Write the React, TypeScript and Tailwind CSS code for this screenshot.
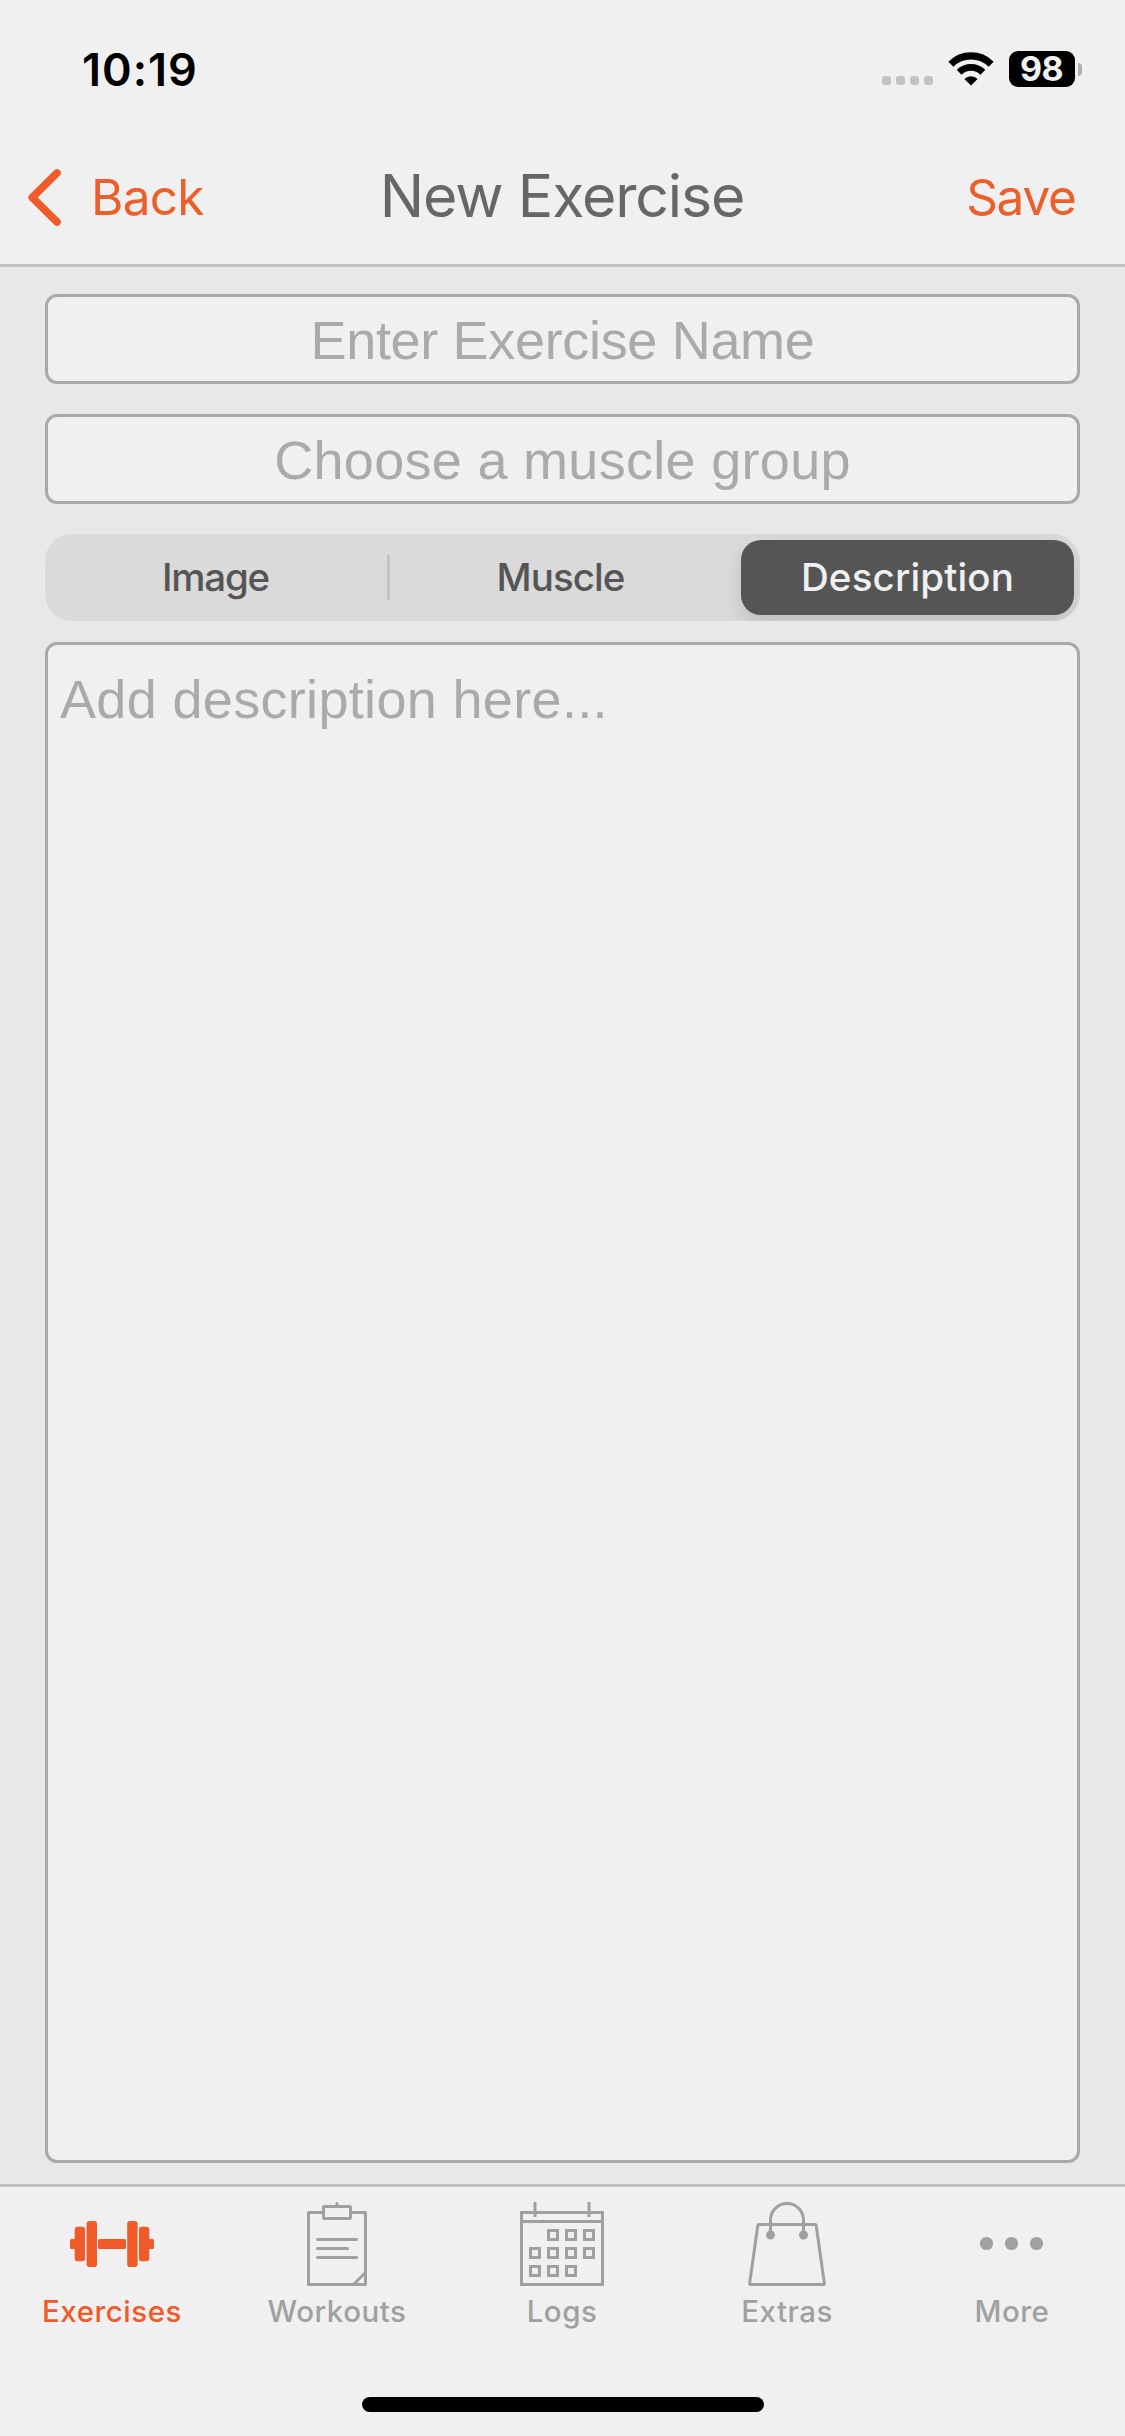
import { useState } from "react";
import type { ReactNode } from "react";
import clsx from "clsx";

interface Tab {
    label: string;
    icon: ReactNode;
}

function WifiIcon() {
    return (
        <svg width="46" height="34" viewBox="0 0 46 34" fill="none" stroke="black">
            <path d="M2.9 12.2a28.6 28.6 0 0 1 40.2 0" strokeWidth="7.2" />
            <path d="M11.1 20.3a17 17 0 0 1 23.8 0" strokeWidth="6.8" />
            <path d="M23 33.5 16.4 27a9.2 9.2 0 0 1 13.2 0Z" fill="black" stroke="none" />
        </svg>
    );
}

function DumbbellIcon() {
    return (
        <svg width="84" height="84" viewBox="0 0 84 84" fill="currentColor">
            <rect x="0" y="37" width="8" height="10" rx="1.5" />
            <rect x="4.7" y="24.7" width="10.3" height="34.6" rx="2.8" />
            <rect x="16.6" y="19" width="10.4" height="46" rx="2.8" />
            <rect x="28" y="37" width="28" height="10" rx="1.5" />
            <rect x="57.2" y="19" width="10.4" height="46" rx="2.8" />
            <rect x="69" y="24.7" width="10.3" height="34.6" rx="2.8" />
            <rect x="76" y="37" width="8" height="10" rx="1.5" />
        </svg>
    );
}

function ClipboardIcon() {
    return (
        <svg width="84" height="84" viewBox="0 0 84 84" fill="none" stroke="currentColor" strokeWidth="3" strokeLinecap="round" strokeLinejoin="round">
            <path d="M28 10.5H13.5v72h57v-72H56" />
            <rect x="28.5" y="4.5" width="27" height="12" rx="1" />
            <path d="M42 1.5v2M22.5 37.5h39M22.5 46.5h30M22.5 55.5h39M59 82l11-11" />
        </svg>
    );
}

function CalendarIcon() {
    const days = [
        [28.5, 28.5], [46.5, 28.5], [64.5, 28.5],
        [10.5, 46.5], [28.5, 46.5], [46.5, 46.5], [64.5, 46.5],
        [10.5, 64.5], [28.5, 64.5], [46.5, 64.5],
    ];

    return (
        <svg width="84" height="84" viewBox="0 0 84 84" fill="none" stroke="currentColor" strokeWidth="3">
            <rect x="1.5" y="10.5" width="81" height="72" />
            <path d="M1.5 19.5h81M15 0v15M69 0v15" />
            {days.map(([x, y]) => (
                <rect key={`${x}-${y}`} x={x} y={y} width="9" height="9" />
            ))}
        </svg>
    );
}

function BagIcon() {
    return (
        <svg width="84" height="84" viewBox="0 0 84 84" fill="none" stroke="currentColor" strokeWidth="3" strokeLinejoin="round">
            <path d="M14 22.5h56q1 0 1.2 1L79.4 81.5q0 1-1 1H5.6q-1 0-1-1L12.8 23.5q.2-1 1.2-1Z" />
            <path d="M25.5 33V18a16.5 16.5 0 0 1 33 0v15" />
            <circle cx="25.5" cy="33" r="4.5" fill="currentColor" stroke="none" />
            <circle cx="58.5" cy="33" r="4.5" fill="currentColor" stroke="none" />
        </svg>
    );
}

function MoreIcon() {
    return (
        <svg width="84" height="84" viewBox="0 0 84 84" fill="currentColor">
            <circle cx="16.5" cy="41.5" r="6.6" />
            <circle cx="41.5" cy="41.5" r="6.6" />
            <circle cx="66.5" cy="41.5" r="6.6" />
        </svg>
    );
}

const segments = [
    { name: "Image", tracking: "tracking-[-1.2px]" },
    { name: "Muscle", tracking: "tracking-[-0.9px]" },
    { name: "Description", tracking: "tracking-[0.15px]" },
];

const tabs: Tab[] = [
    { label: "Exercises", icon: <DumbbellIcon /> },
    { label: "Workouts", icon: <ClipboardIcon /> },
    { label: "Logs", icon: <CalendarIcon /> },
    { label: "Extras", icon: <BagIcon /> },
    { label: "More", icon: <MoreIcon /> },
];

export default function App() {
    const [segment, setSegment] = useState("Description");
    const [activeTab, setActiveTab] = useState("Exercises");

    return (
        <div className="flex h-[2436px] w-[1125px] flex-col overflow-hidden bg-[#e8e8e8] font-['Inter',sans-serif]">
            <header className="h-[267px] shrink-0 border-b-[3px] border-[#c0c0c0] bg-[#f0f0f0]">
                {/* Status bar */}
                <div className="flex h-[138px] items-center justify-between pr-[43px] pl-[82px]">
                    <span className="text-[45px] leading-none font-semibold tracking-[1px] text-black">10:19</span>
                    <div className="flex items-center">
                        <div className="mt-[23px] mr-[15px] flex gap-[5px]">
                            {[0, 1, 2, 3].map((dot) => (
                                <span key={dot} className="h-[9px] w-[9px] rounded-[3px] bg-[#c3c3c3]" />
                            ))}
                        </div>
                        <WifiIcon />
                        <div className="ml-[15px] flex h-9 w-[66px] items-center justify-center rounded-[9px] bg-black pr-px text-[34px] leading-none font-bold tracking-[-0.5px] text-[#f0f0f0]">
                            98
                        </div>
                        <span className="ml-[3px] h-[13px] w-1 rounded-r-full bg-[#b0b0b0]" />
                    </div>
                </div>

                {/* Navigation */}
                <div className="grid h-[120px] grid-cols-[1fr_auto_1fr] items-center px-[28px] text-[49.5px] leading-none text-[#ec5e2a]">
                    <button className="flex items-center">
                        <svg width="34" height="58" viewBox="0 0 34 58" fill="none" stroke="#f15a29" strokeWidth="7.6" strokeLinecap="round" strokeLinejoin="round">
                            <path d="M29 4 4.2 28.5 29 53" />
                        </svg>
                        <span className="ml-[29px] tracking-[-0.7px]">Back</span>
                    </button>
                    <h1 className="pr-px pb-[6px] text-[59px] leading-none tracking-[-1.15px] text-[#676767]">New Exercise</h1>
                    <button className="mr-[21.5px] justify-self-end tracking-[-1.3px]">Save</button>
                </div>
            </header>

            <main className="flex flex-1 flex-col px-[45px] pt-[27px] pb-[21px]">
                <div className="flex flex-col gap-[30px] font-['Liberation_Sans',sans-serif] text-[54px] text-[#aaaaaa]">
                    <div className="flex h-[90px] items-center justify-center rounded-[12px] border-[3px] border-[#a9a9a9] bg-[#f0f0f0] pt-[2px] leading-none tracking-[-0.33px]">
                        Enter Exercise Name
                    </div>
                    <div className="flex h-[90px] items-center justify-center rounded-[12px] border-[3px] border-[#a9a9a9] bg-[#f0f0f0] pt-[2px] leading-none tracking-[0.3px]">
                        Choose a muscle group
                    </div>
                </div>

                {/* Segmented control */}
                <div className="mt-[30px] flex h-[87px] items-center overflow-hidden rounded-[27px] bg-[#dadada] p-[6px]">
                    {segments.map(({ name, tracking }, i) => (
                        <div key={name} className="flex h-full items-center">
                            {i > 0 && (
                                <span
                                    className={clsx(
                                        "mr-[6px] ml-[3px] h-[45px] w-[3px] shrink-0",
                                        segment === name ? "bg-transparent" : "bg-[#c4c4c4]"
                                    )}
                                />
                            )}
                            <button
                                className={clsx(
                                    "h-full w-[333px] rounded-[20px] text-[38.5px] leading-none font-medium",
                                    tracking,
                                    segment === name ? "bg-[#555555] text-[#f0f0f0] shadow-[0_9px_18px_rgba(0,0,0,0.12)]" : "pr-[4px] text-[#555555]"
                                )}
                                onClick={() => setSegment(name)}
                            >
                                {name}
                            </button>
                        </div>
                    ))}
                </div>

                <div className="mt-[21px] flex-1 rounded-[12px] border-[3px] border-[#a9a9a9] bg-[#f0f0f0] px-3 pt-[24px] font-['Liberation_Sans',sans-serif] text-[54px] leading-[60px] tracking-[0.33px] text-[#aaaaaa]">
                    Add description here...
                </div>
            </main>

            <footer className="h-[252px] shrink-0 border-t-[3px] border-[#c0c0c0] bg-[#f0f0f0]">
                <nav className="grid grid-cols-5 pt-[15px]">
                    {tabs.map((tab) => (
                        <button
                            key={tab.label}
                            className={clsx("flex flex-col items-center", activeTab === tab.label ? "text-[#f15a29]" : "text-[#a0a0a0]")}
                            onClick={() => setActiveTab(tab.label)}
                        >
                            <span className="mr-px">{tab.icon}</span>
                            <span className="mt-[9px] mr-px text-[29.5px] leading-[32px] font-medium tracking-[0.5px]">{tab.label}</span>
                        </button>
                    ))}
                </nav>
                <div className="mx-auto mt-[70px] h-[15px] w-[402px] rounded-full bg-black" />
            </footer>
        </div>
    );
}
